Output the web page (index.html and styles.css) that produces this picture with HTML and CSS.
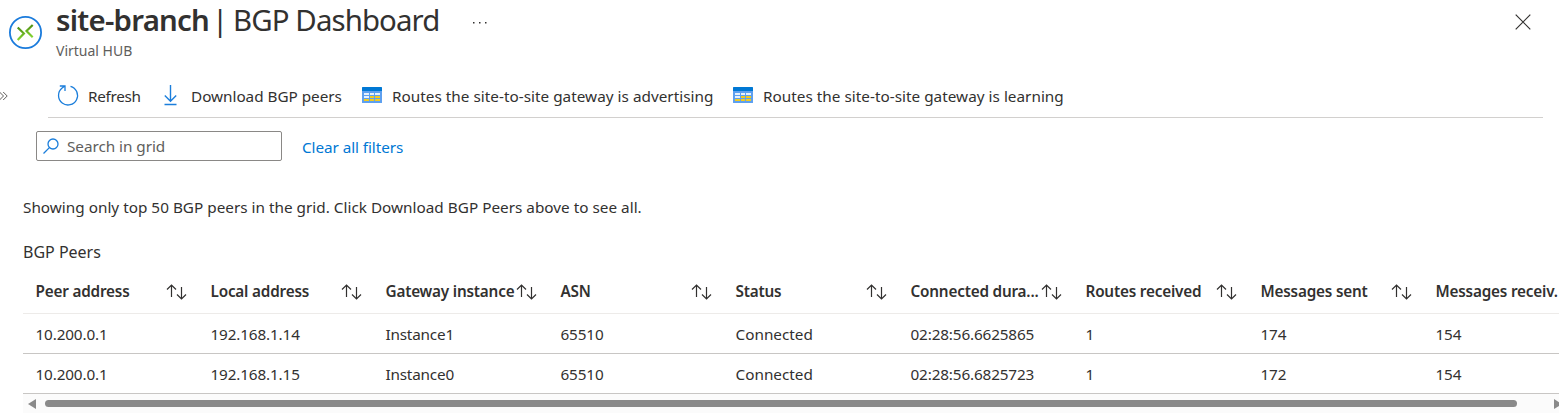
FILE: index.html
```html
<!DOCTYPE html>
<html lang="en">
<head>
<meta charset="utf-8">
<title>BGP Dashboard</title>
<link rel="stylesheet" href="styles.css">
</head>
<body>
<svg class="defs" width="0" height="0" aria-hidden="true">
  <symbol id="sort" viewBox="0 0 21 16"><path d="M5.500 13V1M1 5.500 5.500 1 10 5.500M15.500 3V15M11 10.500 15.500 15 20 10.500" fill="none" stroke="#323130" stroke-width="1.2"/></symbol>
  <symbol id="grid" viewBox="0 0 20 16">
    <path fill="#5ea0ef" d="M0 4h20v11.500q0 .5-.5.5H.5q-.5 0-.5-.5z"/><path fill="#0078d4" d="M.5 0h19q.5 0 .5.500V4H0V.5Q0 0 .5 0z"/>
    <path fill="#e6f1fc" d="M2 6h5v2H2zM8 6h4v2H8zM13 6h5v2h-5zM2 9h5v2H2z"/>
    <path fill="#f2cb1d" d="M8 9h4v2H8zM13 9h5v2h-5zM2 12h5v2H2zM8 12h4v2H8zM13 12h5v2h-5z"/>
  </symbol>
</svg>
<header class="header">
  <svg class="hub-icon" width="34" height="34" viewBox="0 0 34 34" fill="none">
    <defs><linearGradient id="green" x1="0" y1="0" x2="0" y2="1"><stop stop-color="#4f8f14"/><stop offset="1" stop-color="#86d633"/></linearGradient></defs>
    <circle cx="17.500" cy="17.500" r="15.600" stroke="#1a7bdc" stroke-width="1.800"/>
    <path d="M9.700 12.500 15.900 18.500 9.700 25" stroke="url(#green)" stroke-width="2.200"/>
    <path d="M24.700 10 18.500 16 24.700 22.200" stroke="url(#green)" stroke-width="2.200"/>
  </svg>
  <div class="heading">
    <h1 class="title"><b class="name">site-branch</b><span class="bar">|</span><span class="page">BGP Dashboard</span></h1>
    <div class="subtitle">Virtual HUB</div>
  </div>
  <svg class="more" width="16" height="4" viewBox="0 0 16 4" fill="#323130"><path d="M1 1h1.500v1.500H1zM7 1h1.500v1.500H7zM13 1h1.500v1.500H13z"/></svg>
  <svg class="close" width="16" height="16" viewBox="0 0 16 16"><path d="M.7.7 15.300 15.300M15.300.7.7 15.300" stroke="#323130" stroke-width="1.200"/></svg>
</header>
<div class="commands">
  <svg class="expand" width="8" height="10" viewBox="0 0 8 10"><path d="M-.5 1 3.500 5-.5 9M3.200 1 7.200 5 3.200 9" fill="none" stroke="#605e5c"/></svg>
  <nav class="toolbar">
    <span class="command refresh"><svg width="22" height="22" viewBox="0 0 22 22" fill="none" stroke="#1b7edb" stroke-width="1.300"><path d="M13.500 1.300A9.500 9.500 0 1 1 4.800 3.300L7.800 1M2.800 1H8V6"/></svg><span>Refresh</span></span>
    <span class="command download"><svg width="13" height="21" viewBox="0 0 13 21" fill="none" stroke="#1b7edb" stroke-width="1.400"><path d="M6.500 0V16M.8 10.500 6.500 16.200 12.200 10.500M.5 19.500H12.500"/></svg><span>Download BGP peers</span></span>
    <span class="command routes"><svg width="20" height="16"><use href="#grid"/></svg><span>Routes the site-to-site gateway is advertising</span></span>
    <span class="command routes"><svg width="20" height="16"><use href="#grid"/></svg><span>Routes the site-to-site gateway is learning</span></span>
  </nav>
</div>
<div class="filters">
  <div class="search"><svg width="16" height="16" viewBox="0 0 16 16" fill="none" stroke="#1b7edb" stroke-width="1.300"><circle cx="10" cy="6" r="5"/><path d="M6.400 9.600.5 15.500"/></svg><span>Search in grid</span></div>
  <a class="clear">Clear all filters</a>
</div>
<main class="content">
  <p class="note">Showing only top 50 BGP peers in the grid. Click Download BGP Peers above to see all.</p>
  <h2 class="caption">BGP Peers</h2>
  <div class="table">
    <div class="row head">
      <div class="cell"><span>Peer address</span><svg width="21" height="16"><use href="#sort"/></svg></div>
      <div class="cell"><span>Local address</span><svg width="21" height="16"><use href="#sort"/></svg></div>
      <div class="cell"><span>Gateway instance</span><svg width="21" height="16"><use href="#sort"/></svg></div>
      <div class="cell"><span>ASN</span><svg width="21" height="16"><use href="#sort"/></svg></div>
      <div class="cell"><span>Status</span><svg width="21" height="16"><use href="#sort"/></svg></div>
      <div class="cell"><span>Connected dura...</span><svg width="21" height="16"><use href="#sort"/></svg></div>
      <div class="cell"><span>Routes received</span><svg width="21" height="16"><use href="#sort"/></svg></div>
      <div class="cell"><span>Messages sent</span><svg width="21" height="16"><use href="#sort"/></svg></div>
      <div class="cell"><span>Messages receiv.</span></div>
    </div>
    <div class="row"><div class="cell num">10.200.0.1</div><div class="cell num">192.168.1.14</div><div class="cell">Instance1</div><div class="cell num">65510</div><div class="cell status">Connected</div><div class="cell num">02:28:56.6625865</div><div class="cell num">1</div><div class="cell num">174</div><div class="cell num">154</div></div>
    <div class="row"><div class="cell num">10.200.0.1</div><div class="cell num">192.168.1.15</div><div class="cell">Instance0</div><div class="cell num">65510</div><div class="cell status">Connected</div><div class="cell num">02:28:56.6825723</div><div class="cell num">1</div><div class="cell num">172</div><div class="cell num">154</div></div>
  </div>
  <div class="scrollbar"><svg width="8" height="10" viewBox="0 0 8 10"><path d="M8 0v10L0 5z" fill="#8a8a8a"/></svg><div class="thumb"></div><svg width="8" height="10" viewBox="0 0 8 10"><path d="M0 0v10l8-5z" fill="#8a8a8a"/></svg></div>
</main>
</body>
</html>
```

FILE: styles.css
```css
* { box-sizing: border-box; }
body { margin: 0; height: 419px; overflow: hidden; background: #fff; color: #323130; font: 15.3px/20px "Noto Sans", "Open Sans", sans-serif; }
svg { flex: none; display: block; overflow: visible; }
.defs { position: absolute; }
.header { display: flex; height: 76px; padding-left: 8px; }
.hub-icon { margin-top: 15px; }
.heading { width: 416px; margin-left: 14px; white-space: nowrap; }
.title { display: flex; margin: 0; height: 41px; font-size: 29.4px; line-height: 41px; font-weight: 400; }
.name { font-weight: 600; letter-spacing: -.75px; width: 156px; }
.bar { width: 21px; }
.page { letter-spacing: -.9px; }
.subtitle { color: #605e5c; font-size: 14px; line-height: 20px; }
.more { margin-top: 21px; }
.close { margin: 14px 28px 0 auto; }
.commands { display: flex; height: 42px; }
.expand { margin-top: 15px; }
.toolbar { display: flex; align-items: center; width: 1495px; margin-left: 40px; padding: 0 0 2px 9px; border-bottom: 1px solid #d2d0ce; white-space: nowrap; }
.command { display: flex; align-items: center; gap: 9px; }
.refresh { width: 106px; letter-spacing: -.3px; }
.download { width: 199px; gap: 14px; padding-left: 1px; letter-spacing: -.03px; }
.routes { width: 371px; gap: 10px; letter-spacing: .02px; }
.routes svg { margin-bottom: 2px; }
.filters { display: flex; align-items: center; height: 58px; padding: 0 0 2px 36px; }
.search { display: flex; align-items: center; gap: 8px; width: 246px; height: 30px; padding-left: 6px; border: 1px solid #8a8886; border-radius: 2px; color: #605e5c; letter-spacing: -.05px; }
.clear { margin-left: 20px; padding-top: 2px; color: #0078d4; letter-spacing: -.08px; }
.content { padding-left: 23px; }
.note { margin: 21px 0 0; letter-spacing: .01px; }
.caption { margin: 25px 0 0; font-size: 16px; font-weight: 400; line-height: 20px; }
.table { margin-top: 8px; }
.row { display: grid; grid-template-columns: repeat(9, 175px); height: 40px; align-items: center; border-bottom: 1px solid #c8c6c4; overflow: hidden; }
.head { height: 44px; padding-bottom: 1px; border-color: #edebe9; font-weight: 600; }
.head svg { margin-top: 2px; }
.cell { display: flex; align-items: center; justify-content: space-between; padding: 0 11px 0 12.5px; white-space: nowrap; letter-spacing: -.2px; }
.num { letter-spacing: -.15px; }
.status { letter-spacing: 0; }
.scrollbar { display: flex; align-items: center; height: 19px; padding-left: 5px; background: #fbfbfb; overflow: hidden; }
.thumb { flex: none; width: 1472px; height: 7px; margin: 0 37px 0 9px; border-radius: 4px; background: #8a8a8a; }
```
